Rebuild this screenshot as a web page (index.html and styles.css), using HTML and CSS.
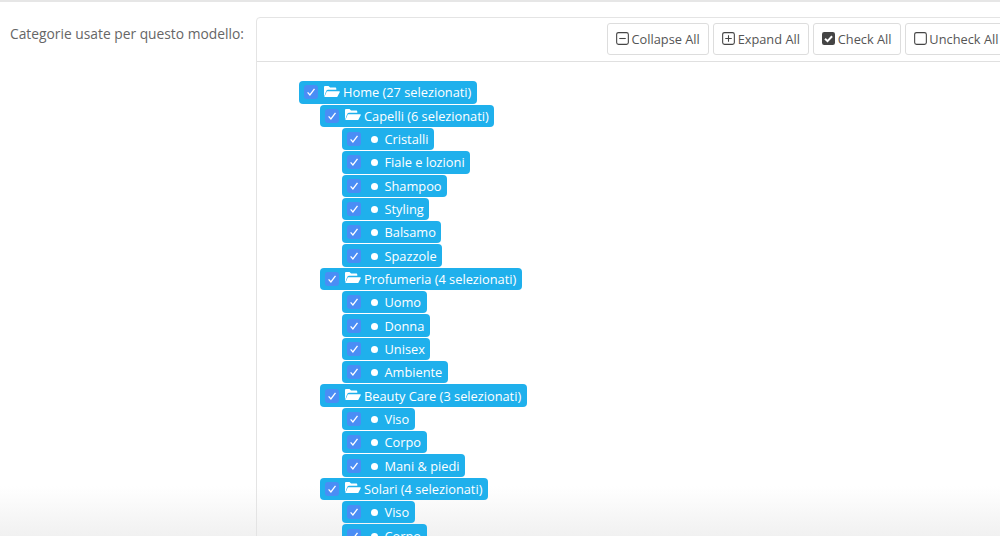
FILE: index.html
```html
<!DOCTYPE html>
<html lang="it">
<head>
<meta charset="utf-8">
<title>Categorie</title>
<link rel="stylesheet" href="styles.css">
</head>
<body>
<svg width="0" height="0" class="defs">
<symbol id="folder" viewBox="0 0 17 13"><path d="M1 12V2.2C1 1.5 1.5 1 2.2 1h3.3l1.6 1.6h5c.7 0 1.2.5 1.2 1.2v.9H5.2c-.9 0-1.6.4-2 1.2z" fill="#fff"/><path d="M3.8 6.2h12.2c.6 0 1 .6.7 1.1l-2.5 4.7H1.4z" fill="#fff"/></symbol>
<symbol id="check" viewBox="0 0 14 14"><path d="M3.6 7.4l2.3 2.5 4.6-6" fill="none" stroke="#fff" stroke-width="1.3"/></symbol>
</svg>
<div class="form-row">
  <label class="form-label">Categorie usate per questo modello:</label>
  <section class="panel">
    <div class="toolbar">
      <button class="btn"><svg class="ico" viewBox="0 0 12 12"><rect x=".6" y=".6" width="10.8" height="10.8" rx="1.8" fill="none" stroke="#444"/><path d="M3 6h6" stroke="#444"/></svg>Collapse All</button>
      <button class="btn"><svg class="ico" viewBox="0 0 12 12"><rect x=".6" y=".6" width="10.8" height="10.8" rx="1.8" fill="none" stroke="#444"/><path d="M3 6h6M6 3v6" stroke="#444"/></svg>Expand All</button>
      <button class="btn"><svg class="ico" viewBox="0 0 12 12"><rect width="12" height="12" rx="2" fill="#444"/><path d="M2.8 6.2l2.3 2.3 4.2-4.6" fill="none" stroke="#fff" stroke-width="1.8"/></svg>Check All</button>
      <button class="btn"><svg class="ico" viewBox="0 0 12 12"><rect x=".6" y=".6" width="10.8" height="10.8" rx="1.8" fill="none" stroke="#444"/></svg>Uncheck All</button>
    </div>
    <ul class="tree">
      <li class="node l0"><span class="box"><svg class="tick"><use href="#check"/></svg></span><svg class="folder"><use href="#folder"/></svg>Home (27 selezionati)</li>
      <li class="node l1"><span class="box"><svg class="tick"><use href="#check"/></svg></span><svg class="folder"><use href="#folder"/></svg>Capelli (6 selezionati)</li>
      <li class="node l2"><span class="box"><svg class="tick"><use href="#check"/></svg></span><i class="dot"></i>Cristalli</li>
      <li class="node l2"><span class="box"><svg class="tick"><use href="#check"/></svg></span><i class="dot"></i>Fiale e lozioni</li>
      <li class="node l2"><span class="box"><svg class="tick"><use href="#check"/></svg></span><i class="dot"></i>Shampoo</li>
      <li class="node l2"><span class="box"><svg class="tick"><use href="#check"/></svg></span><i class="dot"></i>Styling</li>
      <li class="node l2"><span class="box"><svg class="tick"><use href="#check"/></svg></span><i class="dot"></i>Balsamo</li>
      <li class="node l2"><span class="box"><svg class="tick"><use href="#check"/></svg></span><i class="dot"></i>Spazzole</li>
      <li class="node l1"><span class="box"><svg class="tick"><use href="#check"/></svg></span><svg class="folder"><use href="#folder"/></svg>Profumeria (4 selezionati)</li>
      <li class="node l2"><span class="box"><svg class="tick"><use href="#check"/></svg></span><i class="dot"></i>Uomo</li>
      <li class="node l2"><span class="box"><svg class="tick"><use href="#check"/></svg></span><i class="dot"></i>Donna</li>
      <li class="node l2"><span class="box"><svg class="tick"><use href="#check"/></svg></span><i class="dot"></i>Unisex</li>
      <li class="node l2"><span class="box"><svg class="tick"><use href="#check"/></svg></span><i class="dot"></i>Ambiente</li>
      <li class="node l1"><span class="box"><svg class="tick"><use href="#check"/></svg></span><svg class="folder"><use href="#folder"/></svg>Beauty Care (3 selezionati)</li>
      <li class="node l2"><span class="box"><svg class="tick"><use href="#check"/></svg></span><i class="dot"></i>Viso</li>
      <li class="node l2"><span class="box"><svg class="tick"><use href="#check"/></svg></span><i class="dot"></i>Corpo</li>
      <li class="node l2"><span class="box"><svg class="tick"><use href="#check"/></svg></span><i class="dot"></i>Mani &amp; piedi</li>
      <li class="node l1"><span class="box"><svg class="tick"><use href="#check"/></svg></span><svg class="folder"><use href="#folder"/></svg>Solari (4 selezionati)</li>
      <li class="node l2"><span class="box"><svg class="tick"><use href="#check"/></svg></span><i class="dot"></i>Viso</li>
      <li class="node l2"><span class="box"><svg class="tick"><use href="#check"/></svg></span><i class="dot"></i>Corpo</li>
    </ul>
  </section>
</div>
</body>
</html>
```
FILE: styles.css
```css
html, body {
  margin: 0;
  height: 536px;
  overflow: hidden;
  background: #fff;
}
body {
  font-family: "Open Sans", sans-serif;
  color: #555;
  border-top: 2px solid #e6e6e6;
  box-sizing: border-box;
  background: linear-gradient(to bottom, #fff 0, #fff 484px, #f1f1f1 534px);
}
.defs {
  position: absolute;
}
.form-row {
  display: flex;
  align-items: flex-start;
  padding-top: 15px;
}
.form-label {
  width: 256px;
  flex: none;
  box-sizing: border-box;
  padding: 7px 0 0 10px;
  font-size: 13.8px;
  line-height: 19px;
  color: #666;
}
.panel {
  flex: none;
  width: 760px;
  height: 600px;
  box-sizing: border-box;
  border: 1px solid #e4e4e4;
  border-radius: 4px 0 0 0;
}
.toolbar {
  display: flex;
  gap: 4px;
  height: 44px;
  box-sizing: border-box;
  padding: 5px 0 0 350px;
  border-bottom: 1px solid #e0e0e0;
}
.btn {
  flex: none;
  height: 32px;
  display: flex;
  align-items: center;
  gap: 2.5px;
  padding: 0 8.3px 0 8px;
  background: #fff;
  border: 1px solid #ddd;
  border-radius: 3px;
  font: 12.8px "Open Sans", sans-serif;
  color: #555;
  white-space: nowrap;
}
.ico {
  width: 13px;
  height: 13px;
  flex: none;
  margin-top: -1px;
}
.tree {
  list-style: none;
  margin: 0;
  padding: 19.2px 0 0 0;
}
.node {
  display: flex;
  align-items: center;
  width: fit-content;
  height: 22.33px;
  margin-bottom: 1px;
  box-sizing: border-box;
  padding: 0 5.5px 0 4.5px;
  background: #1fb0ec;
  border-radius: 4px;
  color: #fff;
  font-size: 12.8px;
  line-height: 18px;
  white-space: nowrap;
}
.l0 { margin-left: 42px; }
.l1 { margin-left: 63px; }
.l2 { margin-left: 85px; }
.box {
  width: 14px;
  height: 14px;
  flex: none;
  margin-right: 6px;
  background: #4a8df5;
  border-radius: 3px;
  display: block;
}
.tick {
  width: 14px;
  height: 14px;
  display: block;
}
.folder {
  width: 17px;
  height: 13px;
  flex: none;
  margin: -2px 3px 0 -0.5px;
}
.dot {
  width: 7px;
  height: 7px;
  flex: none;
  margin: 1px 7px 0 4px;
  border-radius: 50%;
  background: #fff;
}
```
